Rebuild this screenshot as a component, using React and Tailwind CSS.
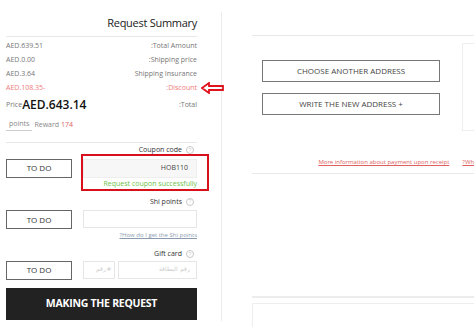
function Help() {
  return (
    <span className="inline-flex items-center justify-center w-[8px] h-[8px] rounded-full border border-[#c8c8c8] text-[5px] text-[#c0c0c0] leading-none">
      ?
    </span>
  );
}

function Row({ value, label, red }) {
  return (
    <div className={"flex justify-between items-center h-[14px] text-[7px] " + (red ? "text-[#f07c7c]" : "text-[#777]")}>
      <span>{value}</span>
      <span>{label}</span>
    </div>
  );
}

function TodoButton() {
  return (
    <div className="w-[66px] h-[19px] border border-[#666] flex items-center justify-center text-[8px] text-[#333]">
      TO DO
    </div>
  );
}

export default function App() {
  return (
    <div
      className="w-[474px] h-[327px] bg-white flex overflow-hidden"
      style={{ fontFamily: '"Open Sans", "Noto Sans", sans-serif' }}
    >
      {/* Summary column */}
      <div className="w-[222px] shrink-0 pt-[14px] pl-[6px] pr-[24px] border-r border-[#ececec] mb-[6px] mt-[12px]">
        <div className="text-right text-[11px] text-[#222] leading-none -mt-[9px] pb-[8px] border-b border-[#e8e8e8] tracking-tight">
          Request Summary
        </div>
        <div className="pt-[2px]">
          <Row value="AED.639.51" label=":Total Amount" />
          <Row value="AED.0.00" label=":Shipping price" />
          <Row value="AED.3.64" label="Shipping Insurance" />
          <div className="relative">
            <Row value="AED.108.35-" label=":Discount" red />
            <svg className="absolute left-[195px] top-[1px]" width="24" height="12" viewBox="0 0 24 12">
              <path d="M1 6 L8 1 L8 4 L22 4 L22 8 L8 8 L8 11 Z" fill="none" stroke="#e0141e" strokeWidth="1.8" strokeLinejoin="miter" />
            </svg>
          </div>
          <div className="flex justify-between items-end h-[17px] text-[7px] text-[#777]">
            <span className="flex items-end">
              <span className="pb-[2px]">Price</span>
              <span className="text-[12px] text-[#111] font-semibold leading-none pb-[1px]">AED.643.14</span>
            </span>
            <span className="pb-[2px]">:Total</span>
          </div>
        </div>
        <div className="mt-[8px] border-b border-[#e8e8e8] pb-[11px] flex items-end text-[7px] text-[#888]">
          <span className="border-b border-[#ccc] px-[3px] pb-[3px] leading-none">points</span>
          <span className="ml-[2px] pb-[3px] leading-none">
            Reward <span className="text-[#e06060]">174</span>
          </span>
        </div>

        {/* Coupon */}
        <div className="mt-[2px] flex justify-end items-center gap-[4px] text-[7px] text-[#333] pr-[3px]">
          <span>Coupon code</span>
          <Help />
        </div>
        <div className="flex mt-[3px] gap-[11px]">
          <TodoButton />
          <div className="relative w-[114px]">
            <div className="h-[19px] bg-[#f7f7f7] border border-[#eee] flex items-center justify-end pr-[8px] text-[7px] text-[#444]">
              HOB110
            </div>
            <div className="text-right text-[7px] text-[#6cbf4b] mt-[1px] leading-[10px]">
              Request coupon successfully
            </div>
            <div className="absolute left-[-2px] top-[-5px] w-[128px] h-[37px] border-[2.5px] border-[#d8101c]" />
          </div>
        </div>

        {/* Shi points */}
        <div className="mt-[8px] flex justify-end items-center gap-[4px] text-[7px] text-[#333] pr-[3px]">
          <span>Shi points</span>
          <Help />
        </div>
        <div className="flex mt-[3px] gap-[11px]">
          <TodoButton />
          <div className="w-[114px] h-[18px] border border-[#e6e6e6]" />
        </div>
        <div className="text-right text-[6px] text-[#8a9bb0] underline mt-[2px] leading-[9px]">
          ?How do I get the Shi points
        </div>

        {/* Gift card */}
        <div className="mt-[9px] flex justify-end items-center gap-[4px] text-[7px] text-[#333] pr-[3px]">
          <span>Gift card</span>
          <Help />
        </div>
        <div className="flex mt-[1px] gap-[11px]">
          <TodoButton />
          <div className="w-[114px] flex gap-[3px]">
            <div className="w-[32px] h-[18px] border border-[#e6e6e6] flex items-center justify-end pr-[3px] text-[6px] text-[#ccc]">
              رقم #
            </div>
            <div className="flex-1 h-[18px] border border-[#e6e6e6] flex items-center justify-end pr-[6px] text-[6px] text-[#ccc]">
              رقم البطاقة
            </div>
          </div>
        </div>

        <div className="mt-[8px] h-[32px] bg-[#222] flex items-center justify-center text-white text-[10.5px] font-bold tracking-tight">
          MAKING THE REQUEST
        </div>
      </div>

      {/* Address column */}
      <div className="flex-1 pl-[30px] pt-[35px] flex flex-col">
        <div className="border-t border-[#e8e8e8] flex">
          <div className="flex-1 pl-[10px] pt-[24px] flex flex-col gap-[11px]">
            <div className="w-[178px] h-[22px] border border-[#777] flex items-center justify-center text-[8px] text-[#444]">
              CHOOSE ANOTHER ADDRESS
            </div>
            <div className="w-[178px] h-[22px] border border-[#777] flex items-center justify-center text-[8px] text-[#444]">
              WRITE THE NEW ADDRESS +
            </div>
          </div>
          <div className="w-[12px] h-[88px] mt-[7px] border-l border-t border-b border-[#eee]" />
        </div>
        <div className="mt-[27px] pb-[6px] border-b border-[#e8e8e8] flex justify-end gap-[13px] text-[6px] text-[#e06060] underline whitespace-nowrap -mr-[12px]">
          <span>More information about payment upon receipt</span>
          <span>?Why do</span>
        </div>
        <div className="mt-[122px] border-t-2 border-[#ececec]" />
        <div className="mt-[5px] flex-1 border-t border-l border-[#eee]" />
      </div>
    </div>
  );
}
